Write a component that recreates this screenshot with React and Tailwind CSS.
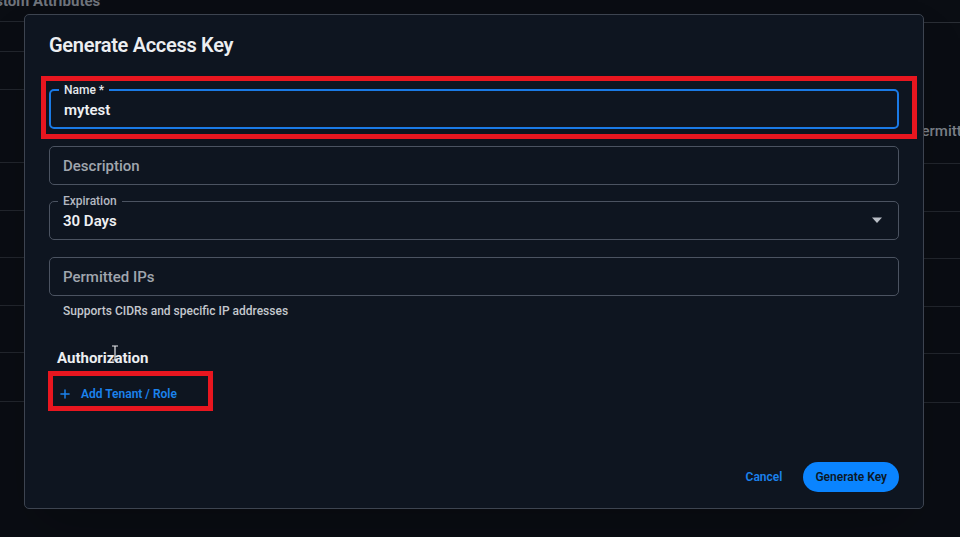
import { Plus } from 'lucide-react';

const font = { fontFamily: 'Roboto, "Liberation Sans", sans-serif' };

// Background rows peeking out from behind the dialog
const LEFT_ROWS  = [22, 30, 38, 73, 48, 47, 48, 47, 49];
const RIGHT_ROWS = [141, 48, 47, 48, 47, 49];

function OutlinedField({ label, value, placeholder, focused, select }) {
  const border = focused
    ? 'border-2 border-[#1a7ae6]'
    : 'border border-[#4b5361]';
  return (
    <div className={`relative ${focused ? 'h-10' : 'h-[39px]'} rounded-[5px] ${border} flex items-center px-[13px]`}>
      {label && (
        <span
          className={`absolute -top-[8px] left-[8px] px-[5px] bg-[#0e1520] text-[12px] leading-[14px] font-medium ${
            focused ? 'text-[#e6e9ee]' : 'text-[#b3b8c0]'
          }`}
        >
          {label}
        </span>
      )}
      {value ? (
        <span className={`text-[15px] font-semibold text-[#eef0f3] ${label ? 'pt-[2px]' : ''}`}>{value}</span>
      ) : (
        <span className="text-[15px] font-medium text-[#a0a6ae] pt-[1px]">{placeholder}</span>
      )}
      {select && (
        <svg className="ml-auto mr-[2px]" width="12" height="7" viewBox="0 0 12 7">
          <path d="M1 0.5h10L6 6z" fill="#b9bec6" />
        </svg>
      )}
    </div>
  );
}

export default function App() {
  return (
    <div className="relative w-[960px] h-[537px] overflow-hidden bg-[#0a0d13]" style={font}>
      {/* ── Page behind the modal ── */}
      <div className="absolute -top-[10px] -left-[23px] text-[15px] font-bold text-[#6f747c] whitespace-nowrap">
        Custom Attributes
      </div>
      <div className="flex h-full">
        <div className="w-[24px] flex flex-col">
          {LEFT_ROWS.map((h, i) => (
            <div key={i} className="border-b border-[#22262d] shrink-0" style={{ height: h }} />
          ))}
        </div>
        <div className="flex-1" />
        <div className="w-[36px] flex flex-col pt-[22px]">
          <div className="h-px bg-[#2a2e35]" />
          {RIGHT_ROWS.map((h, i) => (
            <div key={i} className="border-b border-[#22262d] shrink-0 flex items-start" style={{ height: h }}>
              {i === 0 && (
                <span className="mt-[99px] -ml-[12px] text-[15px] leading-[18px] font-medium text-[#7c828a] whitespace-nowrap">
                  Permitted IPs
                </span>
              )}
            </div>
          ))}
        </div>
      </div>

      {/* ── Dialog ── */}
      <div className="absolute left-[24px] top-[14px] w-[900px] h-[495px] rounded-[5px] border border-[#3d4450] bg-[#0e1520] shadow-2xl flex flex-col px-[24px]">
        <h2 className="mt-[17px] text-[20px] leading-[26px] font-semibold text-[#eceef1] tracking-[-0.3px]">
          Generate Access Key
        </h2>

        <div className="mt-[31px] flex flex-col">
          <OutlinedField label="Name *" value="mytest" focused />
          <div className="mt-[17px]">
            <OutlinedField placeholder="Description" />
          </div>
          <div className="mt-[16px]">
            <OutlinedField label="Expiration" value="30 Days" select />
          </div>
          <div className="mt-[17px]">
            <OutlinedField placeholder="Permitted IPs" />
          </div>
          <p className="mt-[8px] ml-[14px] text-[12px] leading-[14px] font-medium text-[#c4c8ce]">
            Supports CIDRs and specific IP addresses
          </p>
        </div>

        <h3 className="mt-[31px] ml-[8px] text-[15px] leading-[18px] font-bold text-[#eceef1]">
          Authorization
        </h3>
        <button className="mt-[20px] ml-[9px] self-start flex items-center gap-[9px] text-[12px] leading-[14px] font-semibold text-[#1b82ee]">
          <Plus size={14} strokeWidth={2.5} />
          Add Tenant / Role
        </button>

        <div className="mt-auto mb-[16px] flex items-center justify-end gap-[21px]">
          <button className="text-[12px] font-semibold text-[#1b82ee]">Cancel</button>
          <button className="h-[30px] px-[12px] rounded-full bg-[#0a84ff] text-[12px] font-semibold text-[#0c1826]">
            Generate Key
          </button>
        </div>
      </div>

      {/* ── Annotation boxes drawn over the screenshot ── */}
      <div className="absolute left-[41px] top-[76px] w-[876px] h-[63px] border-[5px] border-[#e8161f]" />
      <div className="absolute left-[48px] top-[371px] w-[165px] h-[40px] border-[5px] border-[#e8161f]" />

      {/* text cursor */}
      <svg className="absolute left-[111px] top-[345px]" width="8" height="16" viewBox="0 0 8 16">
        <path d="M1 1h6M4 1v14M1 15h6" stroke="#e6e8ec" strokeWidth="1.2" fill="none" />
      </svg>
    </div>
  );
}
